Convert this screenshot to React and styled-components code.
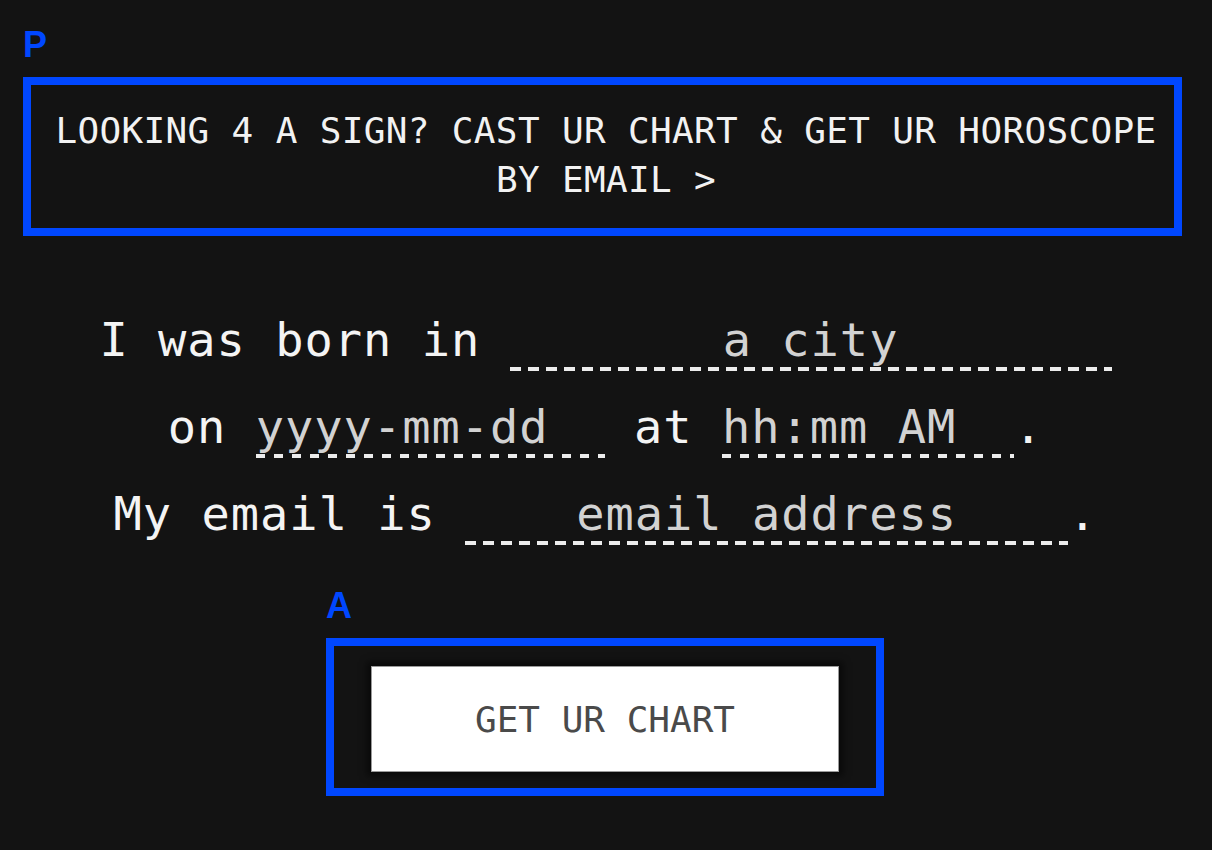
import React from 'react';
import styled, { createGlobalStyle } from 'styled-components';

const GlobalStyle = createGlobalStyle`
  html, body {
    margin: 0;
    padding: 0;
    background: #131313;
  }
  * {
    box-sizing: border-box;
  }
`;

const Page = styled.div`
  display: flex;
  flex-direction: column;
  width: 1212px;
  min-height: 850px;
  padding: 27px 30px 0 23px;
  background: #131313;
  font-family: 'DejaVu Sans Mono', 'Liberation Mono', monospace;
  color: #f2f2f2;
`;

const Tag = styled.div`
  margin-bottom: 14px;
  font-family: 'Liberation Sans', Arial, sans-serif;
  font-size: 36px;
  font-weight: 700;
  line-height: 36px;
  color: #0047ff;
`;

const Promo = styled.a`
  display: block;
  padding: 21px 0 24px 7px;
  border: 8px solid #0047ff;
  font-size: 36px;
  letter-spacing: 0.35px;
  line-height: 49px;
  text-align: center;
  color: #f2f2f2;
  text-decoration: none;
  cursor: pointer;
`;

const Form = styled.form`
  display: flex;
  flex-direction: column;
  align-items: center;
  margin: 60px 0 0;
  padding-left: 6px;
`;

const Row = styled.div`
  display: flex;
  align-items: baseline;
  justify-content: center;
  height: 87px;
`;

const Words = styled.span`
  font-size: 47px;
  letter-spacing: 1px;
  line-height: 87px;
  white-space: pre;
  color: #f4f4f4;
`;

const Field = styled.input`
  width: ${(p) => p.$w}px;
  height: 62px;
  padding: 0;
  margin: 0;
  border: none;
  outline: none;
  font-family: inherit;
  font-size: 47px;
  letter-spacing: 1px;
  color: #f4f4f4;
  text-align: ${(p) => (p.$center ? 'center' : 'left')};
  background-color: transparent;
  background-image: repeating-linear-gradient(
    to right,
    #ececec 0,
    #ececec ${(p) => p.$dash}px,
    transparent ${(p) => p.$dash}px,
    transparent ${(p) => p.$dash + p.$gap}px
  );
  background-repeat: no-repeat;
  background-position: left bottom;
  background-size: 100% ${(p) => p.$thick}px;

  &::placeholder {
    color: #d2d2d2;
    opacity: 1;
  }
`;

const ActionWrap = styled.div`
  display: flex;
  flex-direction: column;
  align-self: center;
  margin: 31px 0 0 5px;
`;

const ActionBox = styled.div`
  display: flex;
  justify-content: center;
  width: 558px;
  padding: 20px 37px 16px;
  border: 8px solid #0047ff;
`;

const Submit = styled.button`
  width: 468px;
  height: 106px;
  border: 1px solid #9a9a9a;
  background: #fff;
  box-shadow: 0 0 7px 4px rgba(0, 0, 0, 0.55);
  font-family: 'DejaVu Sans Mono', 'Liberation Mono', monospace;
  font-size: 36px;
  color: #4a4a4a;
  cursor: pointer;
`;

export default function App() {
  return (
    <Page>
      <GlobalStyle />
      <Tag>P</Tag>
      <Promo>
        LOOKING 4 A SIGN? CAST UR CHART &amp; GET UR HOROSCOPE
        <br />
        BY EMAIL &gt;
      </Promo>

      <Form onSubmit={(e) => e.preventDefault()}>
        <Row>
          <Words>I was born in </Words>
          <Field $w={602} $center $dash={11} $gap={7} $thick={4} placeholder="a city" />
        </Row>
        <Row>
          <Words>on </Words>
          <Field $w={349} $dash={9} $gap={9} $thick={4} placeholder="yyyy-mm-dd" />
          <Words> at </Words>
          <Field $w={292} $dash={9} $gap={9} $thick={4} placeholder="hh:mm AM" />
          <Words>.</Words>
        </Row>
        <Row>
          <Words>My email is </Words>
          <Field $w={603} $center $dash={11} $gap={7} $thick={4} placeholder="email address" />
          <Words>.</Words>
        </Row>
      </Form>

      <ActionWrap>
        <Tag>A</Tag>
        <ActionBox>
          <Submit type="submit">GET UR CHART</Submit>
        </ActionBox>
      </ActionWrap>
    </Page>
  );
}
